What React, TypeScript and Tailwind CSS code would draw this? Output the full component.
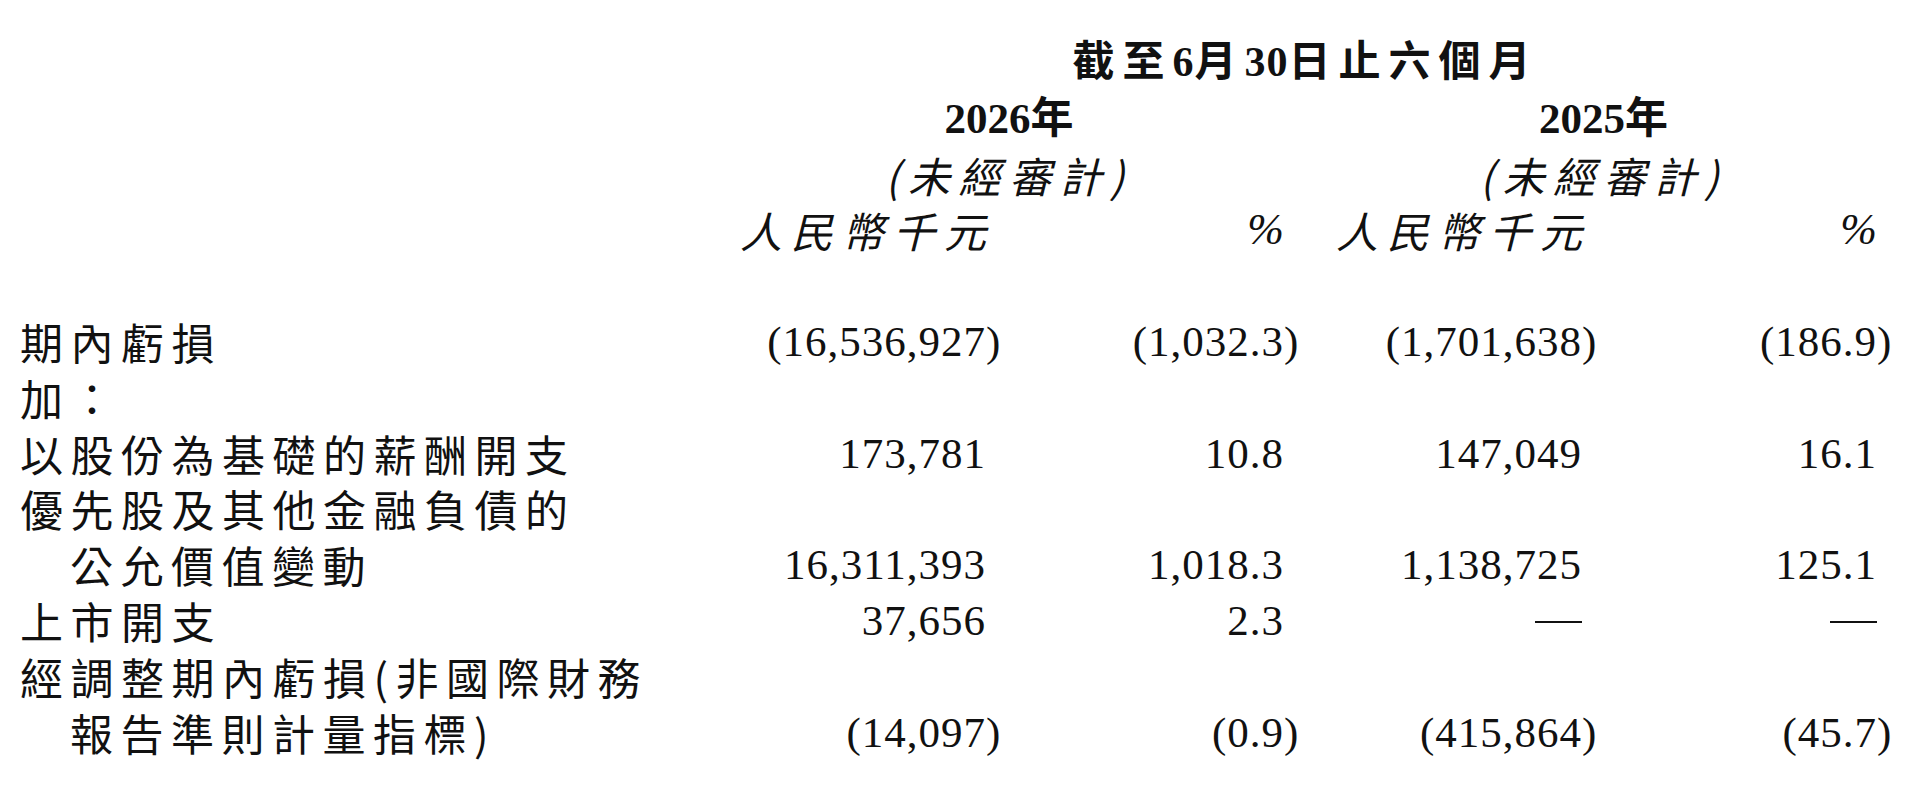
import React from "react";

type Row = {
  label: string;
  indent?: boolean;
  vals?: [string, string, string, string];
};

const rows: Row[] = [
  { label: "期內虧損", vals: ["(16,536,927)", "(1,032.3)", "(1,701,638)", "(186.9)"] },
  { label: "加：" },
  { label: "以股份為基礎的薪酬開支", vals: ["173,781", "10.8", "147,049", "16.1"] },
  { label: "優先股及其他金融負債的" },
  { label: "公允價值變動", indent: true, vals: ["16,311,393", "1,018.3", "1,138,725", "125.1"] },
  { label: "上市開支", vals: ["37,656", "2.3", "—", "—"] },
  { label: "經調整期內虧損(非國際財務" },
  { label: "報告準則計量指標)", indent: true, vals: ["(14,097)", "(0.9)", "(415,864)", "(45.7)"] },
];

function Num({ v }: { v: string }) {
  if (v === "—") {
    return (
      <div className="text-right font-['Liberation_Serif',serif] text-[42px] leading-[55.8px]">
        <span className="inline-block w-[47px] h-[2px] bg-[#111] align-middle relative top-[-2px]"></span>
      </div>
    );
  }
  const neg = v.startsWith("(");
  const body = neg ? v.slice(0, -1) : v;
  return (
    <div className="text-right font-['Liberation_Serif',serif] text-[43px] leading-[55.8px] tracking-[1px] whitespace-nowrap">
      {body}
      {neg ? <span className="inline-block w-0 text-left">)</span> : null}
    </div>
  );
}

export default function App() {
  return (
    <div className="w-[1920px] h-[786px] bg-white text-[#111] pt-[35px] pl-[20px] pr-[43px] overflow-hidden">
      <div className="grid grid-cols-[1fr_298px_298px_298px_295px] auto-rows-[55.8px] items-center">
        {/* title */}
        <div></div>
        <div className="col-span-4 pl-[46px] text-center font-['Liberation_Serif','Noto_Sans_CJK_TC',sans-serif] font-bold text-[42px] leading-[55.8px] tracking-[8px] whitespace-nowrap">
          截至<span className="tracking-[1px]">6</span>月<span className="tracking-[1px]">30</span>日止六個月
        </div>

        {/* years */}
        <div></div>
        <div className="col-span-2 pl-[46px] text-center font-['Liberation_Serif','Noto_Sans_CJK_TC',sans-serif] font-bold text-[43px] leading-[55.8px] whitespace-nowrap">
          2026年
        </div>
        <div className="col-span-2 pl-[46px] text-center font-['Liberation_Serif','Noto_Sans_CJK_TC',sans-serif] font-bold text-[43px] leading-[55.8px] whitespace-nowrap">
          2025年
        </div>

        {/* unaudited */}
        <div></div>
        <div className="col-span-2 pl-[46px] text-center italic font-['Noto_Sans_CJK_TC',sans-serif] text-[42px] leading-[55.8px] tracking-[8.5px] whitespace-nowrap">
          (未經審計)
        </div>
        <div className="col-span-2 pl-[46px] text-center italic font-['Noto_Sans_CJK_TC',sans-serif] text-[42px] leading-[55.8px] tracking-[8.5px] whitespace-nowrap">
          (未經審計)
        </div>

        {/* units */}
        <div></div>
        <div className="text-right italic font-['Noto_Sans_CJK_TC',sans-serif] text-[42px] leading-[55.8px] tracking-[9px] mr-[-9px] whitespace-nowrap">
          人民幣千元
        </div>
        <div className="text-right italic font-['Liberation_Serif',serif] text-[44px] leading-[55.8px]">%</div>
        <div className="text-right italic font-['Noto_Sans_CJK_TC',sans-serif] text-[42px] leading-[55.8px] tracking-[9px] mr-[-9px] whitespace-nowrap">
          人民幣千元
        </div>
        <div className="text-right italic font-['Liberation_Serif',serif] text-[44px] leading-[55.8px]">%</div>

        {/* blank */}
        <div className="col-span-5"></div>

        {rows.map((r, i) => (
          <React.Fragment key={i}>
            <div
              className={
                "font-['Noto_Sans_CJK_TC',sans-serif] text-[43px] leading-[55.8px] tracking-[7.5px] whitespace-nowrap " +
                (r.indent ? "pl-[50px]" : "")
              }
            >
              {r.label}
            </div>
            {r.vals ? (
              r.vals.map((v, j) => <Num key={j} v={v} />)
            ) : (
              <div className="col-span-4"></div>
            )}
          </React.Fragment>
        ))}
      </div>
    </div>
  );
}
